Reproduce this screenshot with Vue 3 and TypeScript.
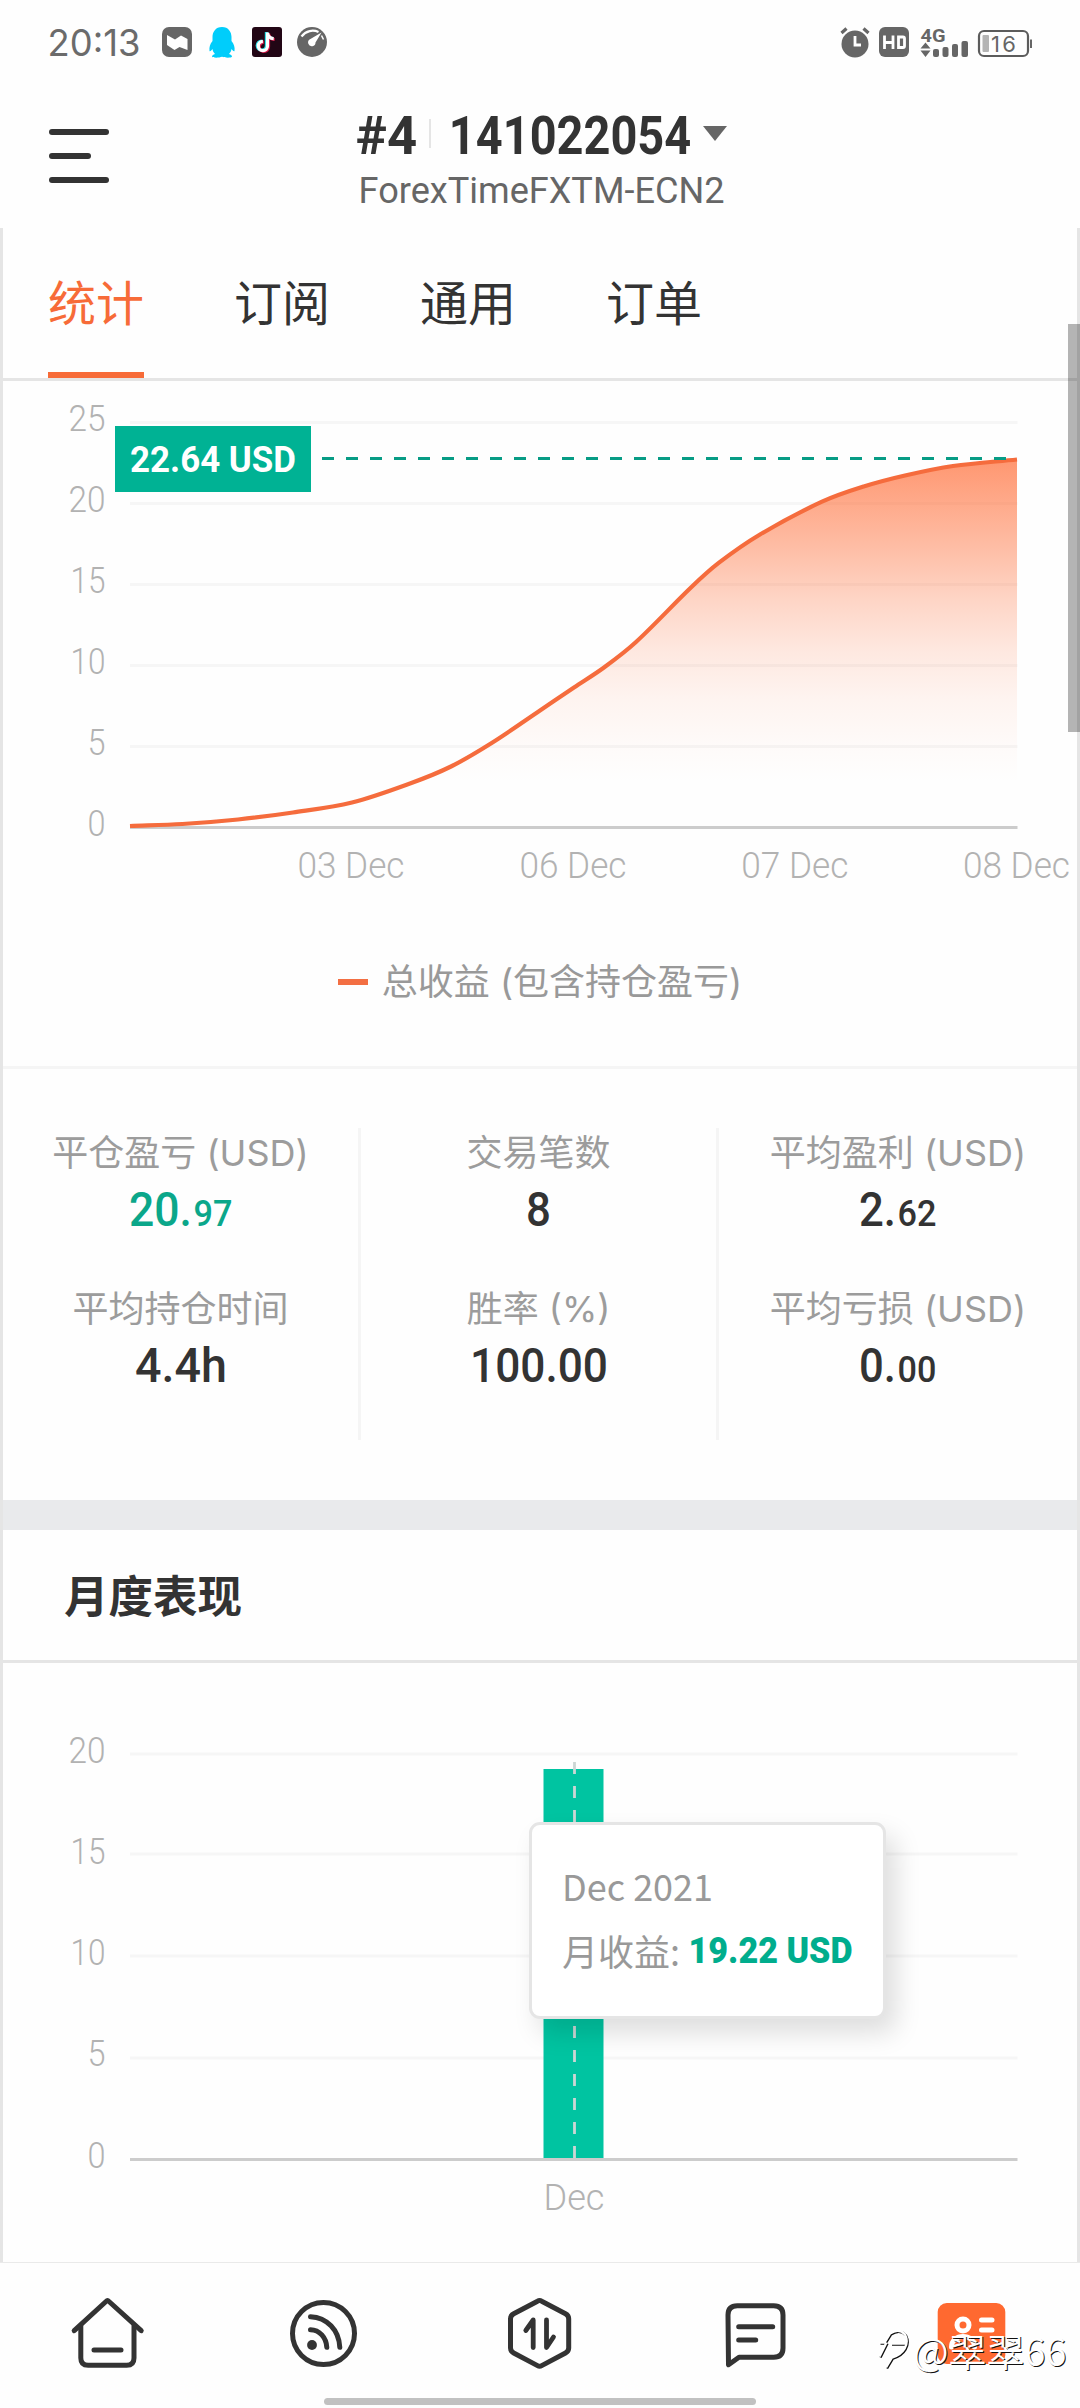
<script setup lang="ts">
import { h } from 'vue'

/* Condensed numerals: a line of text fitted to a fixed width */
interface FitProps {
  t: string
  w: number
  size: number
  height: number
  base: number
  weight?: number
  color?: string
}
const Fit = (p: FitProps) =>
  h('svg', { width: p.w, height: p.height, style: 'display:block;overflow:visible;flex:none' }, [
    h('text', {
      x: -0.04 * p.size,
      y: p.base,
      textLength: p.w + 0.08 * p.size,
      lengthAdjust: 'spacingAndGlyphs',
      'font-size': p.size,
      'font-weight': p.weight ?? 400,
      fill: p.color ?? '#333',
    }, p.t),
  ])
Fit.props = ['t', 'w', 'size', 'height', 'base', 'weight', 'color']

const tabs = ['统计', '订阅', '通用', '订单']

interface Tick { t: string; x: number; w: number; y: number; line: number }
const ticks = (rows: [string, number, number][]): Tick[] =>
  rows.map(([t, line, y]) => {
    const w = t.length === 1 ? 15 : t[0] === '1' ? 32 : 34
    return { t, w, x: 104 - w, y, line }
  })
const profitTicks = ticks([
  ['25', 422.5, 431], ['20', 503.5, 512], ['15', 584.5, 593],
  ['10', 665.5, 674], ['5', 746.5, 755], ['0', 827.5, 836],
])
const monthTicks = ticks([
  ['20', 1754, 1763], ['15', 1854, 1864], ['10', 1956, 1965],
  ['5', 2058, 2066], ['0', 2159.5, 2167.5],
])
const days = [
  { t: '03 Dec', x: 299.5 }, { t: '06 Dec', x: 521.5 },
  { t: '07 Dec', x: 743.3 }, { t: '08 Dec', x: 965 },
]

const pts: [number, number][] = [
  [130, 826], [182.5, 824], [238, 819.5], [293, 812.5], [352, 802.5], [410, 783.5], [451, 766.5],
  [492.5, 742.5], [540, 710.5], [574, 687.5], [604, 667.5], [636, 642], [691.5, 587], [719, 562.7],
  [760, 534.5], [822, 501.7], [863.7, 486.5], [905, 475.5], [953, 466], [1017, 459.5],
]
const slope = (i: number): number => {
  const a = pts[Math.max(0, i - 1)]
  const b = pts[Math.min(pts.length - 1, i + 1)]
  return (b[1] - a[1]) / (b[0] - a[0])
}
let curve = `M${pts[0][0]} ${pts[0][1]}`
for (let i = 1; i < pts.length; i++) {
  const [x0, y0] = pts[i - 1]
  const [x1, y1] = pts[i]
  const d = (x1 - x0) / 3
  curve += `C${x0 + d} ${y0 + d * slope(i - 1)} ${x1 - d} ${y1 - d * slope(i)} ${x1} ${y1}`
}
const area = `${curve}L1017 826L130 826Z`

interface Stat { label: string; big: string; w: number; small?: string; green?: boolean }
const columns: Stat[][] = [
  [{ label: '平仓盈亏 (USD)', big: '20.', w: 59, small: '97', green: true }, { label: '平均持仓时间', big: '4.4h', w: 88 }],
  [{ label: '交易笔数', big: '8', w: 21 }, { label: '胜率 (%)', big: '100.00', w: 134 }],
  [{ label: '平均盈利 (USD)', big: '2.', w: 33, small: '62' }, { label: '平均亏损 (USD)', big: '0.', w: 33, small: '00' }],
]
</script>

<template>
  <div class="screen">
    <div class="status">
      <div class="left">
        <Fit t="20:13" :w="90" :size="37" :height="30" :base="28.7" color="#6b6b6b" class="clock" />
        <svg class="i1" width="30" height="30" viewBox="0 0 30 30">
          <rect width="30" height="30" rx="7" fill="#666" />
          <path d="M5 8l8 4.500 6-4 6.500 3.500v11l-8-3-5 3-7.500-5z" fill="#fff" />
        </svg>
        <svg class="i2" width="26" height="31" viewBox="0 0 26 31">
          <path d="M13 0C6.500 0 3.500 5 3.500 10v4C1 17 0 20 .5 24c.5 1 2-.5 3-2 .3 2 1 3.500 2.500 5-2 .7-3 1.500-3 2.500 0 1.500 7 1.500 10 .3 3 1.200 10 1.200 10-.3 0-1-1-1.800-3-2.500 1.500-1.500 2.200-3 2.500-5 1 1.500 2.500 3 3 2 .5-4-.5-7-3-10v-4C22.500 5 19.500 0 13 0z" fill="#00cdfb" />
        </svg>
        <svg class="i3" width="30" height="30" viewBox="0 0 30 30">
          <rect width="30" height="30" rx="3" fill="#220615" />
          <g fill="none" stroke-width="3.200">
            <path d="M15.300 5.500V19a4.600 4.600 0 1 1-4.600-4.600M15.300 6c.5 3.500 3 5.500 6.200 5.700" stroke="#25dce6" transform="translate(-.9 -.4)" />
            <path d="M15.300 5.500V19a4.600 4.600 0 1 1-4.600-4.600M15.300 6c.5 3.500 3 5.500 6.200 5.700" stroke="#d91848" transform="translate(1.200 .8)" />
            <path d="M15.500 5.500V19a4.600 4.600 0 1 1-4.600-4.600M15.500 6c.5 3.500 3 5.500 6.200 5.700" stroke="#fff" />
          </g>
        </svg>
        <svg class="i4" width="30" height="30" viewBox="0 0 30 30">
          <circle cx="15" cy="15" r="15" fill="#666" />
          <path d="M4.500 9.500C9 3.500 16 2.500 21.500 5" fill="none" stroke="#fff" stroke-width="2.200" />
          <path d="M24.500 5.500L18.500 15.500a3.700 3.700 0 1 1-5.500-3.200z" fill="#fff" />
          <path d="M24.500 8.500l2 4" stroke="#fff" stroke-width="1.500" />
        </svg>
      </div>
      <svg width="194" height="40" viewBox="840 19 194 40" class="right">
        <g fill="#666">
          <circle cx="855" cy="44" r="13.500" />
          <path d="M841.500 33l5-4.500M868.500 33l-5-4.500" stroke="#666" stroke-width="3.200" />
          <path d="M855 36v9h6" fill="none" stroke="#fff" stroke-width="2.800" />
          <rect x="879" y="27" width="30" height="30" rx="6" />
          <path d="M884.500 35.500v13.500M893 35.500v13.500M884.500 42.500h8.500M898.500 37h4.500q1.500 0 1.500 1.500v7.500q0 1.500-1.500 1.500h-4.500z" fill="none" stroke="#fff" stroke-width="2.800" />
          <text x="920.500" y="41.500" font-size="19" font-weight="700" textLength="25" lengthAdjust="spacingAndGlyphs">4G</text>
          <path d="M920.500 48.500l5-6 5 6zM920.500 50.500l5 6.500 5-6.500z" />
          <rect x="933" y="49" width="6" height="8" rx="2" />
          <rect x="942.500" y="47" width="6" height="10" rx="2" />
          <rect x="952" y="44" width="6" height="13" rx="2" />
          <rect x="961.500" y="41" width="6.500" height="16" rx="2" />
          <rect x="979" y="31" width="49" height="25" rx="5" fill="#fefefe" stroke="#5c5c5c" stroke-width="2.200" />
          <rect x="982.500" y="35" width="6.500" height="17" rx="1" fill="#b4b4b4" />
          <rect x="1030" y="39.500" width="2" height="8.500" />
          <text x="991" y="51.500" font-size="22" textLength="25" class="inter">16</text>
        </g>
      </svg>
    </div>

    <header>
      <div class="menu"><i /><i /><i /></div>
      <div class="account">
        <div class="line1">
          <Fit t="#4" :w="57" :size="53.500" :height="40" :base="39" :weight="700" />
          <span class="sep" />
          <Fit t="141022054" :w="238" :size="53.500" :height="40" :base="39" :weight="700" />
          <span class="tri" />
        </div>
        <Fit t="ForexTimeFXTM-ECN2" :w="363" :size="36" :height="27" :base="26" color="#666" class="server" />
      </div>
    </header>

    <main>
      <nav class="tabs">
        <span v-for="(t, i) in tabs" :key="t" :class="{ on: i === 0 }">{{ t }}</span>
      </nav>

      <svg class="chart" width="1074" height="524" viewBox="3 381 1074 524">
        <defs>
          <linearGradient id="fill" gradientUnits="userSpaceOnUse" x1="0" y1="459" x2="0" y2="827">
            <stop offset="0" stop-color="#ff6a33" stop-opacity=".7" />
            <stop offset=".22" stop-color="#ff6a33" stop-opacity=".46" />
            <stop offset=".38" stop-color="#ff6a33" stop-opacity=".28" />
            <stop offset=".52" stop-color="#ff6a33" stop-opacity=".15" />
            <stop offset=".65" stop-color="#ff6a33" stop-opacity=".07" />
            <stop offset=".78" stop-color="#ff6a33" stop-opacity=".025" />
            <stop offset=".88" stop-color="#ff6a33" stop-opacity="0" />
          </linearGradient>
        </defs>
        <template v-for="k in profitTicks" :key="k.t">
          <path :d="`M130 ${k.line}H1017.500`" :stroke="k.t === '0' ? '#ccc' : '#f6f6f6'" stroke-width="2.800" />
          <text class="tick" :x="k.x - 1.500" :y="k.y" :textLength="k.w + 3" lengthAdjust="spacingAndGlyphs">{{ k.t }}</text>
        </template>
        <path :d="area" fill="url(#fill)" />
        <path :d="curve" fill="none" stroke="#f56c3d" stroke-width="4.200" />
        <path d="M322 458.500H1008" stroke="#079c85" stroke-width="3" stroke-dasharray="12 12" />
        <rect x="115" y="426" width="196" height="66" fill="#00b294" />
        <text x="130" y="472" font-size="36" font-weight="700" fill="#fff" textLength="166" lengthAdjust="spacingAndGlyphs">22.64 USD</text>
        <text v-for="d in days" :key="d.t" class="tick" :x="d.x - 2" y="878" textLength="107" lengthAdjust="spacingAndGlyphs">{{ d.t }}</text>
      </svg>
      <div class="legend"><i />总收益 (包含持仓盈亏)</div>

      <section class="stats">
        <div v-for="(col, c) in columns" :key="c" class="col">
          <div v-for="s in col" :key="s.label" class="cell">
            <div class="label">{{ s.label }}</div>
            <div class="value">
              <Fit :t="s.big" :w="s.w" :size="49" :height="60" :base="48" :weight="500" :color="s.green ? '#0ba78a' : '#333'" />
              <Fit v-if="s.small" :t="s.small" :w="36" :size="36" :height="60" :base="48" :weight="500" :color="s.green ? '#0ba78a' : '#333'" />
            </div>
          </div>
        </div>
      </section>

      <div class="band" />
      <h2>月度表现</h2>

      <section class="monthly">
        <svg class="chart" width="1074" height="599" viewBox="3 1663 1074 599">
          <template v-for="k in monthTicks" :key="k.t">
            <path :d="`M130 ${k.line}H1017.500`" :stroke="k.t === '0' ? '#ccc' : '#f6f6f6'" stroke-width="2.800" />
            <text class="tick" :x="k.x - 1.500" :y="k.y" :textLength="k.w + 3" lengthAdjust="spacingAndGlyphs">{{ k.t }}</text>
          </template>
          <rect x="543.500" y="1769" width="60" height="389" fill="#00c4a1" />
          <path d="M574.500 1762V2158" stroke="#ccd6d4" stroke-width="2.800" stroke-dasharray="12 12" />
          <text class="tick" x="543.500" y="2210" textLength="61" lengthAdjust="spacingAndGlyphs">Dec</text>
        </svg>
        <div class="tooltip">
          <div class="when">Dec 2021</div>
          <div class="gain">
            <span>月收益:</span>
            <Fit t="19.22 USD" :w="161" :size="37" :height="36" :base="31" :weight="900" color="#00ad8d" />
          </div>
        </div>
      </section>
      <span class="scroll" />
    </main>

    <footer>
      <div class="icons">
        <svg viewBox="0 0 80 80"><path d="M6.200 36.700L38 7.500q1.500-1.500 3 0L73.200 36.700" /><path d="M12.800 32v32q0 7.300 7.300 7.300h38.600q7.300 0 7.300-7.300V32M26 56h27" /></svg>
        <svg viewBox="0 0 80 80"><circle cx="39.500" cy="39.500" r="31" /><path d="M26.500 22.700C43 23.500 55 36 55.800 53.300M26.500 35.700c9 0 15.800 8 16.300 17.600" /><circle cx="28" cy="51" r="4.900" class="solid" /></svg>
        <svg viewBox="0 0 80 80"><path d="M37.500 7.200q2.100-1.200 4.200 0L65.500 19.800q3.200 1.700 3.200 5V54q0 3.300-3.200 5L41.700 71.600q-2.100 1.200-4.200 0L13.700 59q-3.200-1.700-3.200-5V24.800q0-3.300 3.200-5z" /><path d="M33.200 53.500V26l-7.400 10.500M46.500 26v27.500l7-10.500" class="thin" /></svg>
        <svg viewBox="0 0 80 80"><path d="M12 21q0-9.300 9.300-9.300h36.400q9.300 0 9.300 9.300v33q0 9.300-9.300 9.300H23L12.500 70.700z" /><path d="M22.700 32.700h34M22.700 46h17" /></svg>
        <svg viewBox="0 0 80 80"><rect x="5.700" y="9" width="67.600" height="61" rx="9" fill="#ff6930" stroke="none" /><g stroke="#fff"><circle cx="31" cy="31" r="6" /><path d="M19.500 53c0-14 23-14 23 0M49.500 26h10.500M49.500 36h10.500" /></g></svg>
      </div>
      <div class="mark">
        <svg width="32" height="42" viewBox="0 0 32 42" fill="none">
          <path d="M2.500 14.500h5L13 5.500Q22-.5 28 6.500c5 10-2 20-13 23l-6 10M2.500 28.500l7-14M14 15.500h15" stroke="#111" stroke-width="2.400" />
          <path d="M1.500 13.500h5L12 4.500q9-6 15 1c5 10-2 20-13 23l-6 10M1.500 27.500l7-14M13 14.500h15" stroke="#fff" stroke-width="2.400" />
        </svg>
        <span>@翠翠66</span>
      </div>
      <span class="home" />
    </footer>
  </div>
</template>

<style>
body { background: #fefefe; }
</style>

<style scoped>
.screen { width: 1080px; height: 2408px; display: flex; flex-direction: column; overflow: hidden; background: #fefefe; color: #333; font-family: Roboto, "Noto Sans CJK SC", sans-serif; }
.screen * { box-sizing: border-box; }
.chart { display: block; overflow: visible; }
.status { height: 90px; padding: 19px 46px 0 49px; display: flex; justify-content: space-between; align-items: flex-start; }
.left { display: flex; padding-top: 8px; }
.clock, .inter { font-family: Inter, sans-serif; }
.i1 { margin-left: 23px; }
.i2 { margin-left: 17px; }
.i3 { margin-left: 17px; }
.i4 { margin-left: 15px; }
header { height: 138px; display: flex; }
.menu { padding: 39px 0 0 49px; width: 358px; display: flex; flex-direction: column; gap: 18px; }
.menu i { width: 60px; height: 6px; border-radius: 3px; background: #333; }
.menu i:nth-child(2) { width: 42px; }
.account { padding-top: 25px; }
.line1 { display: flex; }
.sep { width: 2px; height: 29px; margin: 4px 20px 0 14px; background: #e5e5e5; }
.tri { margin: 11px 0 0 14px; border: 12px solid transparent; border-top: 15px solid #666; border-bottom: 0; height: 15px; }
.server { margin: 22px 0 0 2px; }
main { height: 2034px; position: relative; border: solid #e5e5e5; border-width: 0 3px; }
.tabs { height: 153px; padding: 0 45px; display: flex; gap: 90px; border-bottom: 3px solid #e5e5e5; font: 400 48px/144px "Noto Sans CJK SC", sans-serif; }
.tabs span { height: 150px; border-bottom: 6px solid transparent; }
.tabs .on { color: #f76b38; border-color: #f76b38; }
.tick { font-size: 36px; font-weight: 300; fill: #b2b2b2; }
.legend { height: 161px; padding-bottom: 7px; display: flex; justify-content: center; align-items: center; color: #999; font: 400 36px/52px Inter, "Noto Sans CJK SC", sans-serif; }
.legend i { width: 30px; height: 6px; margin-right: 14px; background: #f36f43; }
.stats { height: 434px; padding-top: 59px; border-top: 3px solid #f5f5f5; display: flex; }
.col { width: 358px; height: 312px; border-right: 3px solid #f5f5f5; }
.col:last-child { border: 0; }
.cell { height: 156px; }
.label { height: 50px; text-align: center; color: #9c9c9c; white-space: nowrap; font: 400 36px/50px Inter, "Noto Sans CJK SC", sans-serif; }
.value { display: flex; justify-content: center; gap: 5px; }
.band { height: 30px; background: #e9eaec; }
h2 { margin: 0; height: 133px; padding-left: 61px; border-bottom: 3px solid #e5e5e5; font: 700 44.500px/127px "Noto Sans CJK SC", sans-serif; }
.monthly { position: relative; height: 599px; }
.tooltip { position: absolute; left: 526px; top: 159px; width: 357px; height: 197px; padding: 30px 0 0 30px; background: #fff; border: 3px solid #e5e5e5; border-radius: 11px; box-shadow: 10px 14px 26px rgba(0, 0, 0, .13); color: #999; font: 400 36px/60px "Noto Sans CJK SC", sans-serif; }
.gain { display: flex; align-items: center; gap: 10px; height: 70px; }
.gain svg { font-family: Roboto, sans-serif; }
.scroll { position: absolute; right: -3px; top: 96px; width: 12px; height: 408px; background: rgba(0, 0, 0, .29); }
footer { height: 146px; position: relative; border-top: 1px solid #eaeaea; display: flex; flex-direction: column; align-items: center; }
.icons { width: 1080px; padding-top: 31px; display: flex; justify-content: space-around; }
.icons svg { width: 80px; height: 80px; fill: none; stroke: #333; stroke-width: 5px; stroke-linecap: round; stroke-linejoin: round; }
.icons .solid { fill: #333; stroke: none; }
.icons .thin { stroke-width: 4.800px; }
.home { width: 432px; height: 7px; margin-top: 24px; border-radius: 4px; background: #c1c1c1; }
.mark { position: absolute; left: 878px; top: 66px; display: flex; align-items: center; height: 42px; color: #fff; white-space: nowrap; font: 350 38px/42px "Noto Sans CJK SC", sans-serif; text-shadow: 1px 1px 0 #111; }
.mark svg { flex: none; margin-right: 3px; }
</style>
